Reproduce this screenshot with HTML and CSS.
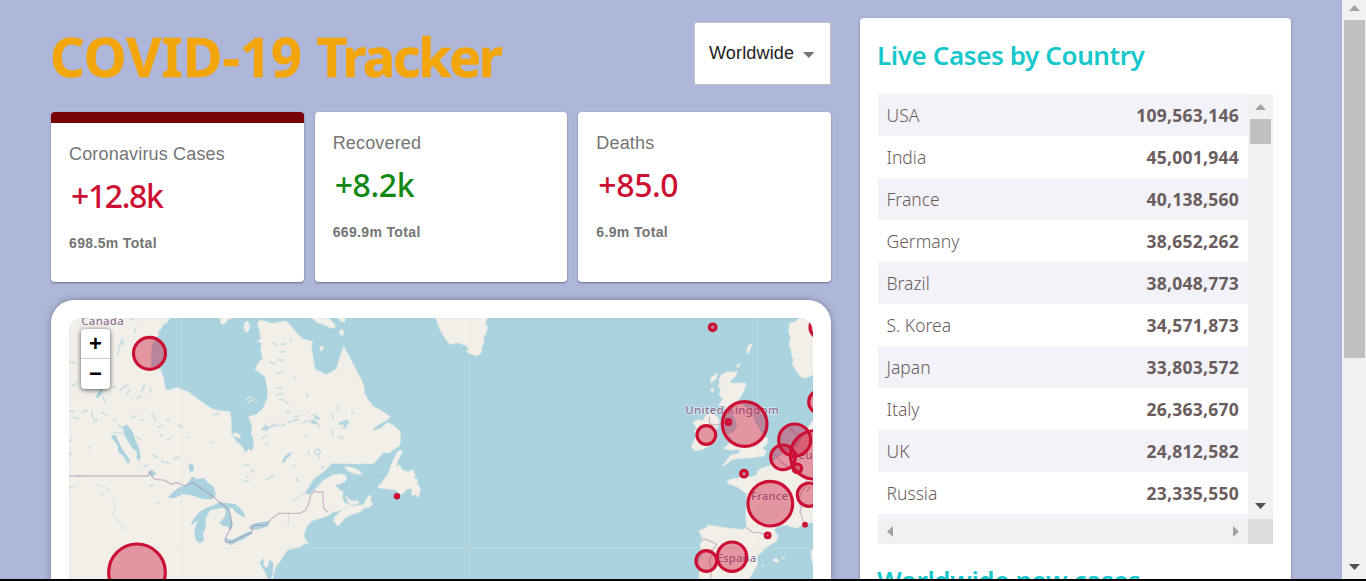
FILE: index.html
```html
<!DOCTYPE html>
<html lang="en">
<head>
<meta charset="utf-8">
<title>COVID-19 Tracker</title>
<link rel="stylesheet" href="styles.css">
</head>
<body>
<div class="viewport">
  <div class="app">
    <main class="left">
      <header class="header">
        <h1 class="title">COVID-19 <span class="title-end">Tracker</span></h1>
        <div class="select"><span>Worldwide</span><svg class="caret" width="12" height="6" viewBox="0 0 12 6"><path d="M0 0h11.5L5.75 6z"/></svg></div>
      </header>
      <section class="stats">
        <article class="stat stat-active"><p class="stat-name">Coronavirus Cases</p><h2 class="stat-num tight">+12.8k</h2><p class="stat-total">698.5m Total</p></article>
        <article class="stat"><p class="stat-name">Recovered</p><h2 class="stat-num green">+8.2k</h2><p class="stat-total">669.9m Total</p></article>
        <article class="stat"><p class="stat-name">Deaths</p><h2 class="stat-num">+85.0</h2><p class="stat-total">6.9m Total</p></article>
      </section>
      <section class="map-card">
        <div class="map">
          <svg class="map-svg" viewBox="57 69 2232 783">
            <!-- North America -->
            <path class="land" d="M57 69H360L350 84 339 88 336 99 324 108 326 120 315 134 306 148 303 180 303 215 331 222 341 250 347 284 360 285 380 277 398 285 412 289 436 307 455 320 487 342 512 347 541 350 544 380 544 417 560 440 574 451 587 474 596 462 605 468 612 455 610 430 604 420 606 395 601 378 595 365 620 358 640 338 652 308 653 285 645 245 615 223 625 205 638 190 632 165 635 145 622 138 633 132 628 105 622 85 630 75 665 85 708 78 728 99 745 120 760 132 787 139 785 160 790 190 795 222 811 230 828 239 845 230 860 220 866 198 873 177 881 153 888 168 896 180 906 202 917 221 925 238 935 254 944 281 942 293 951 309 969 333 984 341 1001 352 1022 365 1010 375 998 382 976 395 968 408 992 400 1012 383 1028 389 1050 408 1052 430 1050 450 1018 474 1000 473 970 506 920 507 880 506 845 505 827 525 810 538 793 550 777 575 765 595 778 599 800 578 821 555 848 540 870 536 888 542 889 556 870 567 855 569 868 584 879 590 877 610 885 625 907 630 902 638 879 645 852 651 830 664 803 672 785 678 770 695 762 718 764 730 777 747 765 745 752 755 713 765 698 785 690 800 680 812 672 830 668 852H57Z"/>
            <path class="land" d="M511 69H548L532 76 526 85 518 89 512 84ZM583 85L592 78 600 90 596 107 588 112 582 100ZM865 69L885 69 886 77 876 82ZM870 107L878 103 882 116 876 122 867 114ZM811 155L820 154 818 165 810 168Z"/>
            <path class="land" d="M785 69H836L854 88 856 99 840 98 822 89 802 83Z"/>
            <path class="land" d="M1050 466L1058 468 1050 485 1043 497 1038 515 1050 510 1055 523 1072 530 1090 524 1095 540 1092 548 1104 554 1101 565 1110 577 1112 587 1104 609 1096 596 1088 604 1084 592 1087 580 1070 583 1060 595 1050 599 1040 586 1018 583 985 579 987 571 997 564 1001 552 1010 544 1017 530 1023 510 1032 490 1040 474ZM884 515L905 517 925 525 938 538 920 538 903 532 890 525ZM851 678L855 664 870 651 890 637 915 632 941 629 948 614 957 601 965 603 960 615 969 628 958 637 942 640 930 651 905 659 888 667 876 680 863 694ZM887 603L896 610 904 618 924 617 928 624 912 630 895 624Z"/>
            <path class="water" d="M544 416L560 413 573 421 570 430 555 427ZM628 802L642 790 640 810 650 820 658 805 654 800 662 795 670 805 668 840 662 852 655 852 645 832Z"/>
            <path class="land" d="M545 417L558 413 570 420 572 430 558 426Z"/>
            <!-- Great lakes -->
            <path class="water" d="M354 609L369 591 388 577 410 570 426 545 442 552 463 549 472 562 491 575 498 600 486 613 460 613 441 606 422 600 396 598 377 608ZM437 736L433 705 444 675 422 693 429 674 448 651 473 637 491 631 511 620 530 630 523 638 481 645 467 670 467 695 459 718 462 735 451 745ZM508 622L555 627 571 639 584 658 587 668 568 659 556 651 549 640 535 638 542 660 548 685 543 707 530 693 518 692 509 684 525 663 527 646ZM521 735L530 730 545 735 577 719 600 708 608 714 581 733 542 750ZM596 697L618 684 658 677 655 692 627 703 603 704ZM415 512L422 505 432 511 431 527 420 531ZM219 395L231 389 247 409 258 439 267 460 272 487 266 500 260 488 261 468 249 463 235 440 222 418ZM183 425L195 418 206 440 218 464 231 482 241 498 234 508 219 483 205 472 202 450ZM295 531L305 523 320 537 306 545ZM136 307L147 288 165 272 154 298 145 308Z"/>
            <path class="river" d="M185 414L218 412M190 612L195 635 189 660 210 685 230 707M58 578L83 572M135 568L155 573 178 584M715 655V690M724 620L780 584M150 595L165 605"/>
            <path class="speck" d="M245 75l10-8M258 98l-5 15M62 200l15 5M202 180l8-30 8-20M216 130l5 20M68 272l13-7M212 285l8-10 15-5M230 300l8-15M260 310l12-6M275 290l8-20M300 278l3 12M165 320l-6-15M98 350l15-3M60 348l12 2M70 366l14 5M130 382l12-10M125 350l5 20M155 352l15 8M190 372l8 5M245 370l14-7M268 378l15-5M305 358l13 18M325 397l15-6M205 390l15 10M352 372l5 6M386 391l12 5M330 420l7 5M350 435l10-2M260 425l10 8M310 480l15 10M335 498l22 7M372 492l15-7M280 515l15-5M58 440l8-8M60 484l3-12M117 457l4 2M84 544l8 2M300 572l10-3M322 620l4 5M415 426l3 2M486 441l4 2M583 510l15 2M602 530l10-5M581 558l15 0M650 553l12-5M665 545l5-5M700 498l8-12 15-13M638 404l15-4 20-12M645 388l5 22M664 395l20-5M636 430l12-6M648 448l6-3M690 394l15-5M715 382l32-8M735 366l12-4M760 383l12-5M785 362l15-5M777 378l16-3M788 380l14 4M803 388l7 10M680 300l22-5M690 312l12 4M708 320l5 6M680 278l15 2M670 145l10 4M695 149l12-3M720 130l4 5M690 170l15 0M685 194l14 2M660 202l15 5M680 235l18-4M735 243l3 4M738 552l7 6M730 510l5 3M775 470l2 8M805 480l5 10M815 520l5-8M765 422l5 5M863 330l2 15M868 385l25-10M880 400l12-20M888 378l10 8M865 425l15 5M845 358l5 12M845 405l4 20M905 350l4 5M770 295l3 10M710 352l10-2M590 545l3 3M490 360l15-4M190 275l6 2"/>
            <path class="speck bold" d="M700 499l7-11 12-10M640 401l12-3M870 386l18-5M884 396l6-14M796 366l8 4M787 381l9 2"/>
            <circle class="ring" cx="803" cy="470" r="8"/>
            <path class="islands" d="M588 314l10-8M592 324l15-10M600 302l3 8M608 318l5-8"/>
            <path class="border" d="M57 543H295L298 530 304 542 313 552 345 556 365 568 380 563 405 572 428 563 465 588 493 607 500 615 520 630 538 645 546 690 526 730 528 742 545 741 575 725 606 713 605 691H648L665 671 686 655H750L767 645 776 625 782 600 794 588 805 592 818 590 821 640 834 652"/>
            <!-- Greenland -->
            <path class="land" d="M1157 69H1312L1306 85 1313 97 1307 118 1301 125 1303 138 1296 155 1294 174 1280 183 1262 177 1250 170 1256 160 1246 151 1220 143 1199 149 1184 128 1171 107Z"/>
            <!-- Europe -->
            <g transform="translate(1770 0)">
              <path class="land" d="M519 69H478L465 81 448 84 446 112 452 130 446 148 452 160 455 180 460 193 457 208 470 230 484 246 497 250 519 239ZM519 295L509 315 514 335 519 341ZM519 375L500 404 473 452 438 469 405 494 390 512 367 518 353 528 350 540 330 546 310 540 303 533 299 548 275 552 260 558 266 567 292 576 320 597 322 620 317 655 319 694 310 704 273 700 247 697 231 694 206 690 195 700 176 707 187 728 181 745 185 780 173 810 178 830 176 852H327L353 808 351 784 380 757 410 738 414 722 402 706 410 695 440 690 468 700 492 688 519 682ZM519 764L512 769 514 788 519 809ZM397 796L409 788 418 800 409 802ZM425 788L436 785 431 791ZM364 812L371 808 370 814Z"/>
              <path class="land" d="M245 239L261 231 293 230 286 245 270 258 276 265 316 263 318 272 303 305 287 322 304 325 320 340 336 352 344 380 357 400 366 420 384 431 383 444 367 460 379 468 373 483 333 489 297 491 275 495 254 512 248 512 273 479 297 475 300 464 270 466 250 460 267 447 275 429 262 420 282 410 292 392 286 372 275 350 257 350 255 333 236 331 248 311 237 300 242 284 234 272 239 263 236 253ZM212 265L213 247 233 234 228 253ZM210 283L223 280 217 293ZM288 212L301 205 294 220ZM320 165L325 151 338 144 330 165 323 179ZM196 362L216 352 236 370 238 387 228 405 230 434 213 450 191 462 166 468 153 457 161 440 169 418 162 407 171 401 159 381 173 374 190 376ZM255 371L263 373 259 384Z"/>
              <path class="border" d="M208 365L209 387 230 390 242 386M318 697L338 712 355 713 382 721M182 740L192 732 220 742 230 748 218 765 217 780 208 795 215 830 212 850M405 478L425 503 450 520 470 530 500 545 500 570 485 590 475 615 484 640 480 650 490 678M500 590L510 575M450 400L480 430"/>
            </g>
            <path class="grid" d="M394 69V852M1258 69V852M2122 69V852M57 760H2289"/>
            <g class="labels">
              <text x="94" y="90" textLength="128">Canada</text>
              <text x="1906" y="356" textLength="281">United Kingdom</text>
              <text x="2103" y="616" textLength="112">France</text>
              <text x="2000" y="801" textLength="120">España</text>
              <text x="2220" y="491">Deutschland</text>
            </g>
            <g class="cases">
              <circle cx="298.500" cy="175" r="48"/><circle cx="261" cy="832" r="85"/><circle cx="1041" cy="604" r="5"/>
              <g transform="translate(1770 0)">
                <circle cx="218" cy="97" r="10"/><circle cx="543" cy="97" r="33"/><circle cx="314" cy="387" r="67"/><circle cx="265" cy="381" r="7"/><circle cx="199" cy="420" r="28"/><circle cx="312" cy="536" r="10"/><circle cx="391" cy="626" r="67"/><circle cx="464" cy="435" r="48"/><circle cx="429" cy="487" r="37"/><circle cx="524" cy="480" r="73"/><circle cx="472" cy="520" r="13"/><circle cx="507" cy="599" r="35"/><circle cx="540" cy="321" r="34"/><circle cx="495" cy="689" r="4"/><circle cx="383" cy="721" r="7"/><circle cx="276" cy="785" r="44"/><circle cx="199" cy="798" r="31"/>
              </g>
            </g>
          </svg>
          <div class="zoom"><span>+</span><span>−</span></div>
        </div>
      </section>
    </main>
    <aside class="right">
      <h3 class="side-title">Live Cases by Country</h3>
      <div class="table">
        <div class="rows">
          <div class="row"><span>USA</span><b>109,563,146</b></div>
          <div class="row"><span>India</span><b>45,001,944</b></div>
          <div class="row"><span>France</span><b>40,138,560</b></div>
          <div class="row"><span>Germany</span><b>38,652,262</b></div>
          <div class="row"><span>Brazil</span><b>38,048,773</b></div>
          <div class="row"><span>S. Korea</span><b>34,571,873</b></div>
          <div class="row"><span>Japan</span><b>33,803,572</b></div>
          <div class="row"><span>Italy</span><b>26,363,670</b></div>
          <div class="row"><span>UK</span><b>24,812,582</b></div>
          <div class="row"><span>Russia</span><b>23,335,550</b></div>
          <div class="row"></div>
        </div>
        <div class="vbar"><svg width="11" height="6"><path class="dim" d="M0 6L5.500 0 11 6z"/></svg><i class="vthumb"></i><svg class="end" width="11" height="6"><path class="dark" d="M0 0h11L5.500 6z"/></svg></div>
        <div class="hbar"><svg width="6" height="11"><path class="dim" d="M6 0L0 5.500 6 11z"/></svg><svg width="6" height="11"><path class="dim" d="M0 0L6 5.500 0 11z"/></svg></div>
        <div class="corner"></div>
      </div>
      <h3 class="side-title second">Worldwide new cases</h3>
    </aside>
  </div>
  <div class="page-bar"><svg width="11" height="6"><path class="dim" d="M0 6L5.500 0 11 6z"/></svg><i class="page-thumb"></i><svg class="end" width="11" height="6"><path class="dark" d="M0 0h11L5.500 6z"/></svg></div>
</div>
</body>
</html>
```
FILE: styles.css
```css
* { box-sizing: border-box; margin: 0; padding: 0; }
body { height: 581px; overflow: hidden; background: #000; }
.viewport { height: 579px; display: flex; overflow: hidden; background: #aeb6d9; }
.app { flex: 1; display: flex; gap: 29px; padding: 18px 51px 0; height: 579px; overflow: hidden; }
.left { width: 780px; flex: none; }

.header { height: 94px; display: flex; justify-content: space-between; align-items: flex-start; padding-top: 4px; }
.title { font: 700 54px/68px "Noto Sans", sans-serif; color: #f2a60c; letter-spacing: .2px; white-space: nowrap; margin-left: -1px; -webkit-text-stroke: .5px #f2a60c; }
.title-end { letter-spacing: -2.5px; }
.select { width: 137px; height: 63px; display: flex; align-items: center; gap: 9px; padding: 0 0 1px 14px; background: #fff; border: 1px solid #c4c4c4; font: 18px "Liberation Sans", Arial, sans-serif; letter-spacing: .17px; color: #212121; border-radius: 2px; }
.caret { fill: #757575; margin-top: 3px; flex: none; }

.stats { display: grid; grid-template-columns: repeat(3, 1fr); gap: 11px; }
.stat { height: 170px; padding: 18px; background: #fff; border-radius: 4px; box-shadow: 0 1px 2px rgba(0,0,0,.4); color: #757575; font-family: "Liberation Sans", Arial, sans-serif; }
.stat-active { border-top: 11px solid #7a0306; }
.stat-name { font-size: 18px; line-height: 27px; letter-spacing: .17px; }
.stat-num { font: 500 32px/42px "Noto Sans", sans-serif; color: #cc1034; padding: 7px 0 0 2px; letter-spacing: -.4px; height: 51px; }
.tight { letter-spacing: -1.4px; }
.green { color: #118811; }
.stat-total { font-size: 14px; font-weight: 700; line-height: 24px; padding-top: 12px; letter-spacing: .35px; height: 36px; }

.map-card { margin-top: 18px; height: 500px; padding: 18px; background: #fff; border-radius: 23px; box-shadow: 0 0 8px -2px rgba(0,0,0,.5); }
.map { position: relative; height: 460px; border-radius: 14px; overflow: hidden; background: #aad3df; }
.map-svg { display: block; width: 744px; height: 261px; }
.land { fill: #f2efe9; stroke: #dfe8e3; stroke-width: 2; stroke-linejoin: round; }
.water { fill: #aad3df; }
.river, .speck, .ring, .islands { fill: none; stroke: #aad3df; stroke-linecap: round; stroke-linejoin: round; }
.river { stroke-width: 2.5; opacity: .7; }
.speck { stroke-width: 5; opacity: .6; }
.bold { stroke-width: 9; opacity: .85; }
.ring { stroke-width: 3; }
.islands { stroke: #dce4df; stroke-width: 4; }
.border { fill: none; stroke: #9d78a0; stroke-opacity: .45; stroke-width: 4; stroke-linejoin: round; }
.grid { fill: none; stroke: #dcdcd8; stroke-opacity: .35; stroke-width: 3; }
.labels { font: 500 34px "Noto Sans", sans-serif; letter-spacing: 1px; fill: #8c6d92; stroke: #fff; stroke-opacity: .6; stroke-width: 5; paint-order: stroke; }
.cases { fill: #cc1034; fill-opacity: .4; stroke: #cc1034; stroke-width: 9.5; }
.zoom { position: absolute; left: 12px; top: 11px; width: 29px; height: 60px; background: #fff; border-radius: 4px; box-shadow: 0 1px 5px rgba(0,0,0,.65); display: grid; grid-template-rows: 30px 30px; font: 700 22px/30px "Liberation Sans", Arial, sans-serif; text-align: center; color: #000; }
.zoom span:first-child { border-bottom: 1px solid #ccc; line-height: 30px; }

.right { width: 431px; height: 900px; flex: none; padding: 18px; background: #fff; border-radius: 4px; box-shadow: 0 1px 3px rgba(0,0,0,.3); }
.side-title { font: 600 26px/38px "Noto Sans", sans-serif; letter-spacing: -.4px; color: #18c7cc; height: 58px; white-space: nowrap; margin-left: -1px; }
.second { margin-top: 17px; letter-spacing: -.4px; }
.table { width: 395px; height: 450px; display: grid; grid-template: 425px 25px / 370px 25px; }
.rows { overflow: hidden; }
.row { height: 42px; display: flex; justify-content: space-between; align-items: center; padding: 0 9px 0 8.5px; font: 350 17.5px "Noto Sans", sans-serif; color: #6a5d5d; }
.row:nth-child(odd) { background: #f3f2f8; }
.row b { font-weight: 700; letter-spacing: .25px; }
.vbar { background: #f1f1f1; display: flex; flex-direction: column; align-items: center; padding: 10px 0; }
.vthumb { width: 21px; height: 25px; background: #c1c1c1; margin-top: 9px; flex: none; }
.end { margin-top: auto; }
.hbar { background: #f1f1f1; display: flex; justify-content: space-between; align-items: center; padding: 0 9px; }
.corner { background: #dcdcdc; }
.dim { fill: #a3a3a3; }
.dark { fill: #505050; }
.page-bar { width: 24px; flex: none; background: #f1f1f1; display: flex; flex-direction: column; align-items: center; padding: 5px 0 9px; }
.page-thumb { width: 21px; height: 338px; background: #c1c1c1; margin-top: 9px; flex: none; }
```
